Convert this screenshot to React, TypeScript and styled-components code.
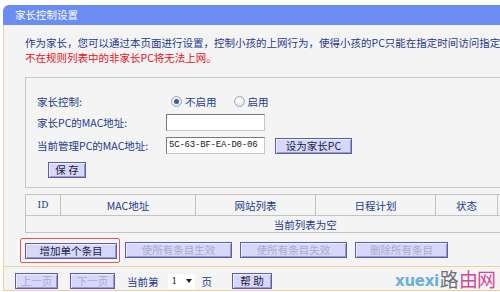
import React from "react";
import styled, { createGlobalStyle } from "styled-components";

const Global = createGlobalStyle`
  html, body { margin: 0; padding: 0; background: #ffffff; overflow: hidden; }
  body { font-family: "SimSun", "Noto Sans CJK SC", "DejaVu Sans", sans-serif; font-size: 10.5px; }
  * { box-sizing: border-box; }
`;

const Page = styled.div`
  width: 500px;
  height: 292px;
  overflow: hidden;
  position: relative;
  padding-top: 5px;
`;

const Frame = styled.div`
  margin-left: 3px;
  width: 620px;
`;

const Header = styled.div`
  height: 20px;
  line-height: 20px;
  background: #6b8df3;
  border-radius: 6px 0 0 0;
  color: #ffffff;
  padding-left: 12px;
  font-size: 10.5px;
`;

const Body = styled.div`
  background: #f4f4f4;
  border-left: 1px solid #f0d2a8;
  padding: 10px 0 3px 21px;
`;

const Line = styled.div<{ $red?: boolean }>`
  height: 15px;
  line-height: 15px;
  white-space: nowrap;
  color: ${(p) => (p.$red ? "#e8101a" : "#1f3a8c")};
`;

const FormBox = styled.div`
  margin-top: 12px;
  height: 111px;
  border-top: 1px solid #c8c8c8;
  border-left: 1px solid #c8c8c8;
  border-bottom: 1px solid #c8c8c8;
  padding: 13px 0 0 11px;
  display: flex;
  flex-direction: column;
`;

const Row = styled.div<{ $h: number }>`
  display: flex;
  align-items: center;
  height: ${(p) => p.$h}px;
`;

const Label = styled.div`
  width: 129px;
  color: #1f3a8c;
  white-space: nowrap;
`;

const RadioGroup = styled.label`
  display: flex;
  align-items: center;
  gap: 3px;
  color: #1f3a8c;
  margin-left: 5px;
  margin-right: 12px;
`;

const Radio = styled.span<{ $on?: boolean }>`
  width: 11px;
  height: 11px;
  border-radius: 50%;
  border: 1px solid #9aa6b8;
  background: radial-gradient(circle at 40% 35%, #ffffff, #d8dde6);
  display: inline-flex;
  align-items: center;
  justify-content: center;
  &::after {
    content: "";
    width: 5px;
    height: 5px;
    border-radius: 50%;
    background: ${(p) => (p.$on ? "#3a5fa8" : "transparent")};
  }
`;

const TextInput = styled.div`
  width: 99px;
  height: 17px;
  background: #ffffff;
  border: 1px solid #7a7a7a;
  border-right-color: #c8c8c8;
  border-bottom-color: #c8c8c8;
  font-family: "Liberation Mono", "DejaVu Sans Mono", monospace;
  font-size: 9px;
  letter-spacing: -0.2px;
  line-height: 15px;
  padding-left: 2px;
  color: #222;
  white-space: nowrap;
  overflow: hidden;
`;

const Btn = styled.button<{ $w: number; $disabled?: boolean }>`
  width: ${(p) => p.$w}px;
  height: 16px;
  padding: 0;
  background: #d6d7f9;
  border: 1px solid #5c5ca8;
  box-shadow: inset 1px 1px 0 #eeeeff, inset -1px -1px 0 #9a9ad0;
  font-family: inherit;
  font-size: 10.5px;
  line-height: 14px;
  color: ${(p) => (p.$disabled ? "#a9abd0" : "#1a1a40")};
  white-space: nowrap;
`;

const SaveRow = styled.div`
  margin-top: 5px;
  margin-left: 11px;
`;

const Table = styled.table`
  margin-top: 6px;
  border-collapse: collapse;
  width: 560px;
  color: #1f3a8c;
  th, td { border: 1px solid #c4c4c4; padding: 0; font-weight: normal; text-align: center; }
  th { height: 21px; }
  td { height: 17px; border-left: 1px solid #c4c4c4; border-right: none; }
`;

const IdHead = styled.th`
  font-family: "DejaVu Serif", serif;
  font-size: 9px;
`;

const ButtonRow = styled.div`
  display: flex;
  align-items: center;
  gap: 8px;
  height: 26px;
  margin-top: 4px;
  margin-left: -5px;
`;

const Highlight = styled.div`
  border: 1px solid #e05a5a;
  border-radius: 2px;
  padding: 4px 2px 3px 4px;
  margin-right: -3px;
`;

const Bottom = styled.div`
  border-top: 1px solid #f0cfa4;
  border-bottom: 1px solid #f0cfa4;
  border-left: 1px solid #f0cfa4;
  background: #f4f4f4;
  height: 25px;
  display: flex;
  align-items: flex-end;
  padding: 0 0 1px 11px;
  color: #1f3a8c;
`;

const Pager = styled.div`
  display: flex;
  align-items: center;
  height: 16px;
`;

const Select = styled.div`
  width: 27px;
  height: 15px;
  background: #ffffff;
  display: flex;
  align-items: center;
  justify-content: space-between;
  padding: 0 3px 0 4px;
  margin: 0 7px 0 9px;
  font-family: "DejaVu Serif", serif;
  font-size: 9px;
  color: #222;
`;

const Caret = styled.span`
  width: 0;
  height: 0;
  border-left: 3px solid transparent;
  border-right: 3px solid transparent;
  border-top: 4px solid #222;
`;

const Spacer = styled.span<{ $w: number }>`
  display: inline-block;
  width: ${(p) => p.$w}px;
`;

const Watermark = styled.div`
  position: absolute;
  left: 395px;
  top: 268px;
  display: flex;
  align-items: flex-end;
  white-space: nowrap;
  height: 22px;
`;

const WmBlue = styled.span`
  color: #6ab0dc;
  font-family: "DejaVu Sans", sans-serif;
  font-size: 15px;
  font-weight: bold;
  letter-spacing: -0.3px;
  line-height: 18px;
`;
const WmGrey = styled.span`
  color: #6a7078;
  font-family: "Noto Sans CJK SC", sans-serif;
  font-size: 19px;
  line-height: 22px;
  margin-left: 1px;
`;
const WmPink = styled.span`
  color: #d04a9a;
  font-family: "Noto Sans CJK SC", sans-serif;
  font-size: 19px;
  line-height: 22px;
  letter-spacing: -1px;
`;

export default function App() {
  return (
    <Page>
      <Global />
      <Frame>
        <Header>家长控制设置</Header>
        <Body>
          <Line>作为家长，您可以通过本页面进行设置，控制小孩的上网行为，使得小孩的PC只能在指定时间访问指定网站。</Line>
          <Line $red>不在规则列表中的非家长PC将无法上网。</Line>
          <FormBox>
            <Row $h={20}>
              <Label>家长控制:</Label>
              <RadioGroup>
                <Radio $on />
                不启用
              </RadioGroup>
              <RadioGroup>
                <Radio />
                启用
              </RadioGroup>
            </Row>
            <Row $h={23}>
              <Label>家长PC的MAC地址:</Label>
              <TextInput />
            </Row>
            <Row $h={23}>
              <Label>当前管理PC的MAC地址:</Label>
              <TextInput>5C-63-BF-EA-D0-06</TextInput>
              <Spacer $w={10} />
              <Btn $w={77}>设为家长PC</Btn>
            </Row>
            <SaveRow>
              <Btn $w={38}>保 存</Btn>
            </SaveRow>
          </FormBox>
          <Table>
            <thead>
              <tr>
                <IdHead style={{ width: 35 }}>ID</IdHead>
                <th style={{ width: 135 }}>MAC地址</th>
                <th style={{ width: 120 }}>网站列表</th>
                <th style={{ width: 120 }}>日程计划</th>
                <th style={{ width: 62 }}>状态</th>
                <th></th>
              </tr>
            </thead>
            <tbody>
              <tr>
                <td colSpan={6}>当前列表为空</td>
              </tr>
            </tbody>
          </Table>
          <ButtonRow>
            <Highlight>
              <Btn $w={92}>增加单个条目</Btn>
            </Highlight>
            <Btn $w={107} $disabled>使所有条目生效</Btn>
            <Btn $w={107} $disabled>使所有条目失效</Btn>
            <Btn $w={93} $disabled>删除所有条目</Btn>
          </ButtonRow>
        </Body>
        <Bottom>
          <Pager>
            <Btn $w={43} $disabled>上一页</Btn>
            <Spacer $w={12} />
            <Btn $w={45} $disabled>下一页</Btn>
            <Spacer $w={12} />
            当前第
            <Select>
              1<Caret />
            </Select>
            页
            <Spacer $w={20} />
            <Btn $w={40}>帮 助</Btn>
          </Pager>
        </Bottom>
      </Frame>
      <Watermark>
        <WmBlue>xuexi</WmBlue>
        <WmGrey>路</WmGrey>
        <WmPink>由网</WmPink>
      </Watermark>
    </Page>
  );
}
